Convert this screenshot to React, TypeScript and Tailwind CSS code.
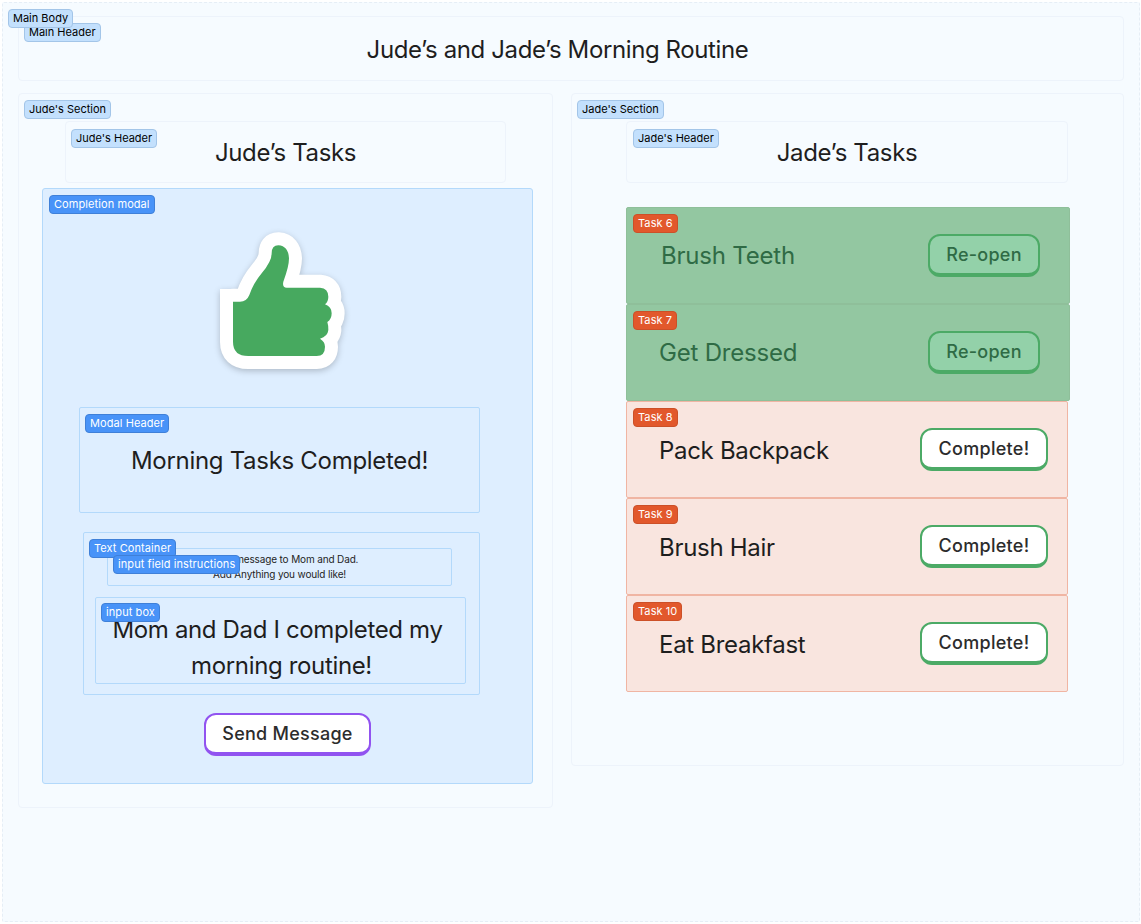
type BadgeProps = { label: string; tone: 'light' | 'blue' | 'orange'; className: string };

function Badge({ label, tone, className }: BadgeProps) {
  const tones = {
    light: 'bg-[#c3e0fd] border-[#a3c5e8] text-black',
    blue: 'bg-[#4893f8] border-[#3f80d8] text-white tracking-[0.08px]',
    orange: 'bg-[#e2582c] border-[#cc5028] text-white tracking-[0.08px]',
  };
  return (
    <span className={`absolute h-[19px] px-[4px] flex items-center rounded-[4px] border text-[11px] leading-none whitespace-nowrap ${tones[tone]} ${className}`}>
      {label}
    </span>
  );
}

function ThumbsUp() {
  const d =
    'M129 245 L150 245 Q170 245 178 225 Q190 190 215 160 Q245 125 245 100 Q245 76 265 76 Q295 78 297 115 Q297 140 280 185 Q276 203 290 203 L390 203 Q415 205 415 230 Q415 245 405 253 Q425 260 425 280 Q425 298 412 306 Q415 315 415 330 Q413 350 390 356 Q405 365 405 380 Q405 408 380 408 L175 408 Q129 408 129 365 Z';
  return (
    <svg viewBox="0 0 540 480" className="w-[180px] h-[160px] ml-[147px] drop-shadow-[0_2px_3px_rgba(0,0,0,0.22)]">
      <rect x="90" y="207" width="60" height="60" fill="#fff" />
      <path d={d} fill="#fff" stroke="#fff" strokeWidth="78" strokeLinejoin="round" />
      <path d={d} fill="#47a95f" />
    </svg>
  );
}

type Task = { tag: string; title: string; done: boolean; titleClass: string };

const tasks: Task[] = [
  { tag: 'Task 6', title: 'Brush Teeth', done: true, titleClass: 'pl-[34px]' },
  { tag: 'Task 7', title: 'Get Dressed', done: true, titleClass: 'pl-[32px]' },
  { tag: 'Task 8', title: 'Pack Backpack', done: false, titleClass: 'pl-[32px]' },
  { tag: 'Task 9', title: 'Brush Hair', done: false, titleClass: 'pl-[32px]' },
  { tag: 'Task 10', title: 'Eat Breakfast', done: false, titleClass: 'pl-[32px]' },
];

function TaskRow({ task }: { task: Task }) {
  return (
    <div
      className={`relative h-[97px] flex items-center justify-between rounded-[2px] border ${
        task.done
          ? 'w-[444px] pr-[29px] bg-[#93c7a1] border-[#8fbf9a] text-[#2f6b45]'
          : 'w-[442px] pr-[19px] bg-[#f9e5df] border-[#f0b5a3] text-[#1e1e1e]'
      }`}
    >
      <Badge label={task.tag} tone="orange" className="left-[6px] top-[6px]" />
      <span
        className={`text-[24px] leading-[36px] ${task.done ? 'tracking-[-0.2px]' : 'tracking-[-0.3px] pt-[2px]'} ${task.titleClass}`}
      >
        {task.title}
      </span>
      {task.done ? (
        <button className="w-[112px] h-[43px] rounded-[12px] border-2 border-b-4 border-[#4caa66] bg-[#93d1a9] text-[18px] tracking-[0.25px] font-medium text-[#2f6b45]">
          Re-open
        </button>
      ) : (
        <button className="w-[128px] h-[43px] rounded-[12px] border-2 border-b-4 border-[#4caa66] bg-white text-[18px] tracking-[0.3px] font-medium text-[#2c2c2c]">
          Complete!
        </button>
      )}
    </div>
  );
}

export default function App() {
  return (
    <div className="w-[1141px] h-[924px] bg-white p-[2px] font-['Inter',sans-serif] text-[#1e1e1e]">
      <div className="relative w-[1138px] h-[920px] bg-[#f6fbff] border border-dashed border-[#e6eef6] rounded-[2px] pt-[13px] px-[15px]">
        <Badge label="Main Body" tone="light" className="left-[5px] top-[6px] z-20" />

        <header className="relative w-[1106px] h-[65px] flex items-center justify-center rounded-[4px] border border-[#edf3fb] pr-[27px]">
          <Badge label="Main Header" tone="light" className="left-[5px] top-[6px] z-10" />
          <h1 className="text-[24px] leading-[36px] tracking-[-0.39px] pt-[2px]">Jude’s and Jade’s Morning Routine</h1>
        </header>

        <div className="flex items-start gap-[18px] mt-[12px]">
          <section className="relative w-[535px] h-[715px] pt-[27px] pl-[23px] rounded-[4px] border border-[#edf3fb]">
            <Badge label="Jude's Section" tone="light" className="left-[5px] top-[6px]" />
            <div className="relative w-[441px] h-[62px] ml-[23px] flex items-center justify-center rounded-[4px] border border-[#edf3fb]">
              <Badge label="Jude's Header" tone="light" className="left-[5px] top-[7px]" />
              <h2 className="text-[24px] leading-[36px] tracking-[-0.36px] pt-[2px]">Jude’s Tasks</h2>
            </div>

            <div className="relative w-[491px] h-[596px] mt-[5px] pt-[31px] rounded-[3px] border border-[#b3d9fb] bg-[#deeeff]">
              <Badge label="Completion modal" tone="blue" className="left-[6px] top-[6px]" />
              <ThumbsUp />

              <div className="relative w-[401px] h-[106px] mt-[27px] ml-[36px] flex items-center justify-center rounded-[2px] border border-[#b3d9fb]">
                <Badge label="Modal Header" tone="blue" className="left-[5px] top-[6px]" />
                <h3 className="text-[24px] leading-[36px] tracking-[-0.3px] pt-[2px]">Morning Tasks Completed!</h3>
              </div>

              <div className="relative w-[397px] h-[163px] mt-[19px] ml-[40px] pt-[15px] rounded-[2px] border border-[#b3d9fb]">
                <Badge label="Text Container" tone="blue" className="left-[5px] top-[6px] z-10" />
                <div className="relative w-[345px] h-[38px] ml-[23px] flex items-center justify-center text-center rounded-[2px] border border-[#b3d9fb]">
                  <Badge label="input field instructions" tone="blue" className="left-[5px] top-[6px] z-20" />
                  <p className="text-[10px] leading-[15px] tracking-[-0.14px] text-[#1e1e1e]">
                    Send a message to Mom and Dad.
                    <br />
                    Add Anything you would like!
                  </p>
                </div>
                <div className="relative w-[371px] h-[87px] mt-[11px] ml-[11px] pt-[15px] flex items-center justify-center text-center rounded-[2px] border border-[#b3d9fb]">
                  <Badge label="input box" tone="blue" className="left-[5px] top-[5px]" />
                  <p className="text-[24px] leading-[36px] tracking-[-0.35px] pl-[2px]">
                    <span className="mr-[8px]">Mom and Dad I completed my</span>
                    <br />
                    morning routine!
                  </p>
                </div>
              </div>

              <div className="flex justify-center mt-[18px]">
                <button className="w-[167px] h-[43px] rounded-[12px] border-2 border-b-4 border-[#9153f0] bg-white text-[18px] tracking-[0.25px] font-medium text-[#2c2c2c]">
                  Send Message
                </button>
              </div>
            </div>
          </section>

          <section className="relative w-[553px] h-[673px] pt-[27px] pl-[54px] rounded-[4px] border border-[#edf3fb]">
            <Badge label="Jade's Section" tone="light" className="left-[5px] top-[6px]" />
            <div className="relative w-[442px] h-[62px] flex items-center justify-center rounded-[4px] border border-[#edf3fb]">
              <Badge label="Jade's Header" tone="light" className="left-[6px] top-[7px]" />
              <h2 className="text-[24px] leading-[36px] tracking-[-0.36px] pt-[2px]">Jade’s Tasks</h2>
            </div>
            <div className="flex flex-col mt-[24px]">
              {tasks.map((task) => (
                <TaskRow key={task.tag} task={task} />
              ))}
            </div>
          </section>
        </div>
      </div>
    </div>
  );
}
